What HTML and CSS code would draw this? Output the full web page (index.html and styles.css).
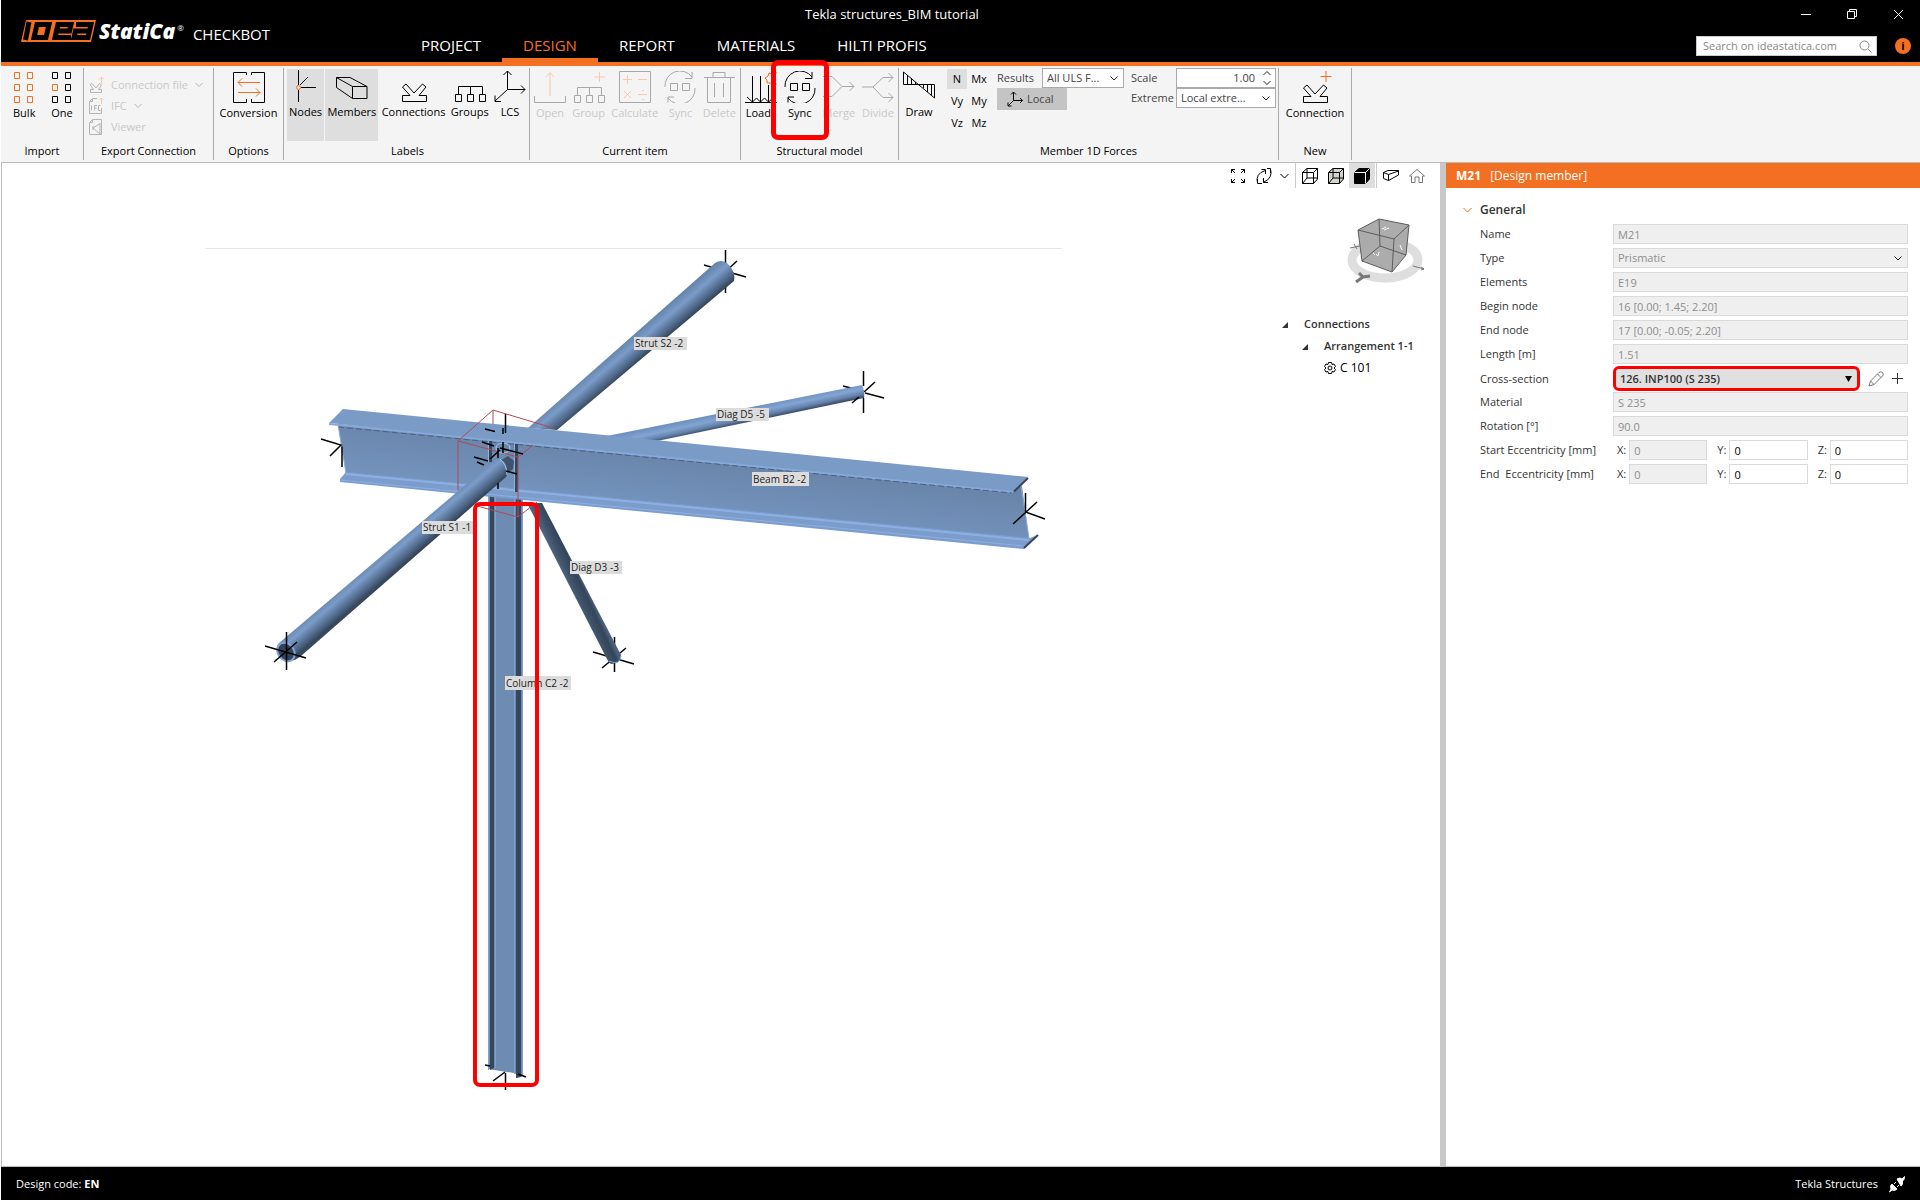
FILE: index.html
```html
<!DOCTYPE html>
<html lang="en">
<head>
    <meta charset="UTF-8">
    <meta name="viewport" content="width=device-width, initial-scale=1.0">
    <title>Tekla structures_BIM tutorial</title>
    <link rel="stylesheet" href="styles.css">
</head>
<body>
    <!-- shared icons -->
    <svg class="defs" width="0" height="0" aria-hidden="true">
        <symbol id="i-conn" viewBox="0 0 32 32"><path d="M4.500 31.500V25.500H12L4.500 17 8 14 16 23 24.500 14 28 17 21 25.500H28.500V31.500Z"/></symbol>
        <symbol id="i-groups" viewBox="0 0 32 32"><path d="M4.500 24V16.500H28.500V24M16.500 16.500V24M1.500 24.500h6v7h-6zM13.500 24.500h6v7h-6zM25.500 24.500h6v7h-6z"/></symbol>
        <symbol id="i-sync" viewBox="0 0 32 32"><path d="M1 16A15 15 0 0 1 28 6M28 1V7.500H21M31 17A15 15 0 0 1 4 27M4 31.500V26H10M6.500 12.500h7v7h-7zM18.500 12.500h7v7h-7z"/></symbol>
        <symbol id="i-axes" viewBox="0 0 32 32"><path d="M13.500 1V19.500H31M13.500 19.500 1 31M9.500 5 13.500 1 17.500 5M27 15.500 31 19.500 27 23.500M1 25.500V31.500H7"/></symbol>
    </svg>

    <header class="header">
        <div class="brand">
            <svg width="76" height="22" viewBox="0 0 76 22" role="img" aria-label="IDEA">
                <path d="M5 0H75L70 22H0Z" fill="#f36f21"/>
                <g fill="none" stroke="#000" stroke-width="5">
                    <path d="M8 2 4.500 20"/>
                    <path d="M16 4.500H28L25 17.500H13Z"/>
                    <path d="M50 17.500H34L37 4.500H50L48.500 11H36"/>
                    <path d="M55 4.500H70L67 17.500H53L54.500 11H68"/>
                </g>
            </svg>
            <span class="brand-name">StatiCa<sup>®</sup></span>
            <span class="brand-app">CHECKBOT</span>
        </div>
        <div class="header-main">
            <div class="title">Tekla structures_BIM tutorial</div>
            <nav class="tabs">
                <a href="#">PROJECT</a>
                <a href="#" class="active">DESIGN</a>
                <a href="#">REPORT</a>
                <a href="#">MATERIALS</a>
                <a href="#">HILTI PROFIS</a>
            </nav>
        </div>
        <div class="header-side">
            <div class="window-buttons">
                <button type="button" aria-label="Minimize"><svg width="11" height="11"><path d="M0 5.500H10"/></svg></button>
                <button type="button" aria-label="Restore"><svg width="11" height="11"><path d="M.500 2.500H7.500V9.500H.500ZM2.500 2.500V.500H9.500V7.500H7.500"/></svg></button>
                <button type="button" aria-label="Close"><svg width="11" height="11"><path d="M1 1 10 10M10 1 1 10"/></svg></button>
            </div>
            <div class="search-row">
                <div class="search">
                    <input type="text" placeholder="Search on ideastatica.com" aria-label="Search on ideastatica.com">
                    <svg width="13" height="13" viewBox="0 0 13 13"><circle cx="5.500" cy="5.500" r="4.500"/><path d="M9 9 12.500 12.500"/></svg>
                </div>
                <button type="button" class="info" aria-label="Info">i</button>
            </div>
        </div>
    </header>

    <div class="ribbon">
        <section class="group group-import">
            <div class="tools">
                <button type="button" class="tool"><svg width="22" height="32" class="orange"><path d="M1.500 1.500h5v6h-5zM14.500 1.500h5v6h-5zM1.500 13.500h5v6h-5zM14.500 13.500h5v6h-5zM1.500 25.500h5v6h-5zM14.500 25.500h5v6h-5z"/></svg>Bulk</button>
                <button type="button" class="tool"><svg width="22" height="32"><path d="M1.500 1.500h5v6h-5zM14.500 1.500h5v6h-5zM14.500 13.500h5v6h-5zM1.500 25.500h5v6h-5zM14.500 25.500h5v6h-5z"/><path class="orange" d="M1.500 13.500h5v6h-5z"/></svg>One</button>
            </div>
            <h2>Import</h2>
        </section>

        <section class="group group-export">
            <div class="stack">
                <button type="button" disabled><svg width="16" height="18" viewBox="0 0 16 18"><path d="M2.500 16.500V13.500H5.500L2 8.500 4 7.500 8 12 11.500 7.500 13.500 9 10.500 13.500H13.500V16.500Z"/><path class="orange" d="M13.500 8V1M11 3.500 13.500 1 16 3.500"/></svg>Connection file<svg width="8" height="6"><path d="M.500 1 4 4.500 7.500 1"/></svg></button>
                <button type="button" disabled><svg width="16" height="18" viewBox="0 0 16 18"><path d="M9 1.500H4.500L1.500 4.500V16.500H13.500V11M4.500 2V4.500H2M3.500 8.500V13.500M6.500 13.500V8.500H9M6.500 11H8.500M12.500 8.500H10.500V13.500H12.500"/><path class="orange" d="M13.500 7V1M11.500 3 13.500 1 15.500 3"/></svg>IFC<svg width="8" height="6"><path d="M.500 1 4 4.500 7.500 1"/></svg></button>
                <button type="button" disabled><svg width="16" height="18" viewBox="0 0 16 18"><path d="M4.500 1.500H13.500V16.500H1.500V4.500ZM4.500 2V4.500H2M5 10 12 5.500V16L5 10M5 8v4"/></svg>Viewer</button>
            </div>
            <h2>Export Connection</h2>
        </section>

        <section class="group group-options">
            <div class="tools">
                <button type="button" class="tool"><svg width="32" height="32"><path d="M13.500 4V1.500H.500V31.500H13.500V28M18.500 4V1.500H31.500V31.500H18.500V28"/><path class="orange" d="M27 11.500H5M9 7.500 5 11.500 9 15.500M5 21.500H27M23 17.500 27 21.500 23 25.500"/></svg>Conversion</button>
            </div>
            <h2>Options</h2>
        </section>

        <section class="group group-labels">
            <div class="tools tight">
                <button type="button" class="tool on"><svg width="32" height="32"><path d="M8.500 0V15M8.500 20V32M11 17.500H26M10 15 18 7"/><circle class="orange" cx="8.500" cy="17.500" r="2"/></svg>Nodes</button>
                <button type="button" class="tool on"><svg width="34" height="32"><path d="M1.500 7.500H15L32 16.500V28.500H17.500L1.500 17.500ZM1.500 7.500 17.500 16.500H32M17.500 16.500V28.500"/></svg>Members</button>
                <button type="button" class="tool"><svg width="32" height="32"><use href="#i-conn"/></svg>Connections</button>
                <button type="button" class="tool"><svg width="32" height="32"><use href="#i-groups"/></svg>Groups</button>
                <button type="button" class="tool"><svg width="32" height="32"><use href="#i-axes"/></svg>LCS</button>
            </div>
            <h2>Labels</h2>
        </section>

        <section class="group group-current">
            <div class="tools">
                <button type="button" class="tool" disabled><svg width="32" height="32"><path d="M.500 25V31.500H31.500V25"/><path class="orange" d="M16 25V2M12 6 16 1.500 20 6"/></svg>Open</button>
                <button type="button" class="tool" disabled><svg width="32" height="32"><use href="#i-groups"/><path class="orange" d="M26.500 1V11M21.500 6H32"/></svg>Group</button>
                <button type="button" class="tool" disabled><svg width="32" height="32"><path d="M.500 .500H31.500V31.500H.500Z"/><path class="orange" d="M4 8.500H13M8.500 4V13M19 8.500H28M5 20 12 27M12 20 5 27M19 23.500H28M23 19.500h2M23 28.500h2"/></svg>Calculate</button>
                <button type="button" class="tool" disabled><svg width="32" height="32"><use href="#i-sync"/></svg>Sync</button>
                <button type="button" class="tool" disabled><svg width="32" height="32"><path d="M1 6.500H32M10 6V1.500H22V6M4.500 7V31.500H27.500V7M11.500 12V26M20.500 12V26"/></svg>Delete</button>
            </div>
            <h2>Current item</h2>
        </section>

        <section class="group group-model">
            <div class="tools">
                <button type="button" class="tool"><svg width="32" height="32"><path d="M0 31.500H32M7.500 5V31M15.500 5V31M23.500 14V31M2 26 7.500 31 11.500 27 15.500 31 19.500 27 23.500 31 28 27"/><path class="orange" d="M32 2 29 1 27 3 24 2 23 5 20 7 22 9 22 12 26 12 28 14 32 13M31 5Q26 8 31 10"/></svg>Loads</button>
                <button type="button" class="tool marked"><svg width="32" height="32"><use href="#i-sync"/></svg>Sync</button>
                <button type="button" class="tool" disabled><svg width="32" height="32"><path d="M0 5.500H9L19 15.500 9 25.500H0M19 15.500H31M26.500 11 31 15.500 26.500 20"/></svg>Merge</button>
                <button type="button" class="tool" disabled><svg width="32" height="32"><path d="M0 16H11L21 6.500H31M11 16 21 26.500H31M26.500 2 31 6.500 26.500 11M26.500 22 31 26.500 26.500 31"/></svg>Divide</button>
            </div>
            <h2>Structural model</h2>
        </section>

        <section class="group group-forces">
            <div class="tools">
                <button type="button" class="tool tool-draw"><svg width="32" height="32"><path d="M.500 2V14.500H31.500V28L.500 2M4.500 5V14M8.500 8V14M12.500 12V14M20.500 15V18M24.500 15V22M28.500 15V25"/></svg>Draw</button>
                <div class="force-grid">
                    <button type="button" class="on">N</button><button type="button">Mx</button>
                    <button type="button">Vy</button><button type="button">My</button>
                    <button type="button">Vz</button><button type="button">Mz</button>
                </div>
                <div class="force-results">
                    <div class="line"><label for="results">Results</label><select id="results"><option>All ULS F...</option></select></div>
                    <button type="button" class="local"><svg width="16" height="16" viewBox="0 0 16 16"><path d="M6.500 1V9.500H15.500M6.500 9.500 1 15M4 3.500 6.500 1 9 3.500M13 7 15.500 9.500 13 12M1 11.500V15H4.500"/></svg>Local</button>
                </div>
                <div class="force-scale">
                    <label for="scale">Scale</label>
                    <div class="spin">
                        <input type="text" id="scale" value="1.00">
                        <svg width="8" height="14"><path d="M.500 4 4 .500 7.500 4M.500 10 4 13.500 7.500 10"/></svg>
                    </div>
                    <label for="extreme">Extreme</label>
                    <select id="extreme"><option>Local extre...</option></select>
                </div>
            </div>
            <h2>Member 1D Forces</h2>
        </section>

        <section class="group group-new">
            <div class="tools">
                <button type="button" class="tool"><svg width="32" height="32"><use href="#i-conn"/><path class="orange" d="M27 0V11M21.500 5.500H32.500"/></svg>Connection</button>
            </div>
            <h2>New</h2>
        </section>
    </div>

    <main class="workspace">
        <div class="viewport">
            <svg class="model" width="880" height="860" viewBox="200 240 880 860">
                <defs>
                    <linearGradient id="strut" gradientUnits="userSpaceOnUse" x1="379" y1="554" x2="397" y2="575">
                        <stop offset="0" stop-color="#6685ad"/><stop offset=".3" stop-color="#7b9cc9"/><stop offset=".65" stop-color="#50698a"/><stop offset=".85" stop-color="#36475b"/><stop offset="1" stop-color="#3b4d63"/>
                    </linearGradient>
                    <linearGradient id="strut2" gradientUnits="userSpaceOnUse" x1="638" y1="331" x2="656" y2="352">
                        <stop offset="0" stop-color="#6685ad"/><stop offset=".3" stop-color="#7b9cc9"/><stop offset=".65" stop-color="#50698a"/><stop offset=".85" stop-color="#36475b"/><stop offset="1" stop-color="#3b4d63"/>
                    </linearGradient>
                    <linearGradient id="diag5" gradientUnits="userSpaceOnUse" x1="760" y1="405" x2="763" y2="419">
                        <stop offset="0" stop-color="#6f91bf"/><stop offset=".4" stop-color="#83a5d4"/><stop offset=".75" stop-color="#6381a9"/><stop offset="1" stop-color="#3b4d66"/>
                    </linearGradient>
                    <linearGradient id="diag3" gradientUnits="userSpaceOnUse" x1="567" y1="584" x2="582" y2="577">
                        <stop offset="0" stop-color="#4c6482"/><stop offset=".35" stop-color="#3f5269"/><stop offset=".75" stop-color="#34455a"/><stop offset="1" stop-color="#4a617e"/>
                    </linearGradient>
                    <linearGradient id="web" gradientUnits="userSpaceOnUse" x1="686" y1="455" x2="680" y2="508">
                        <stop offset="0" stop-color="#6984a8"/><stop offset="1" stop-color="#7393bd"/>
                    </linearGradient>
                </defs>
                <path d="M205 248.500H1062" stroke="#e6e6e6"/>

                <!-- node axes behind the members -->
                <g class="axes">
                    <path d="M725.500 250V293M704 265 746 277M712 284 737 261"/>
                    <path d="M843 386 863 391M865 393 884 398M864 392 875 382"/>
                    <path d="M614.500 637V672M593 652 634 664M602 668 626 648"/>
                </g>

                <path fill="url(#strut2)" d="M528 428 715 263Q722 258 729 265 736 273 734 281L557 430Z"/>
                <path fill="url(#diag5)" d="M607 436 862 385Q865 391 864 398L657 441Z"/>
                <path class="line-dark" d="M863.500 371V386M863.500 398V413M852 403 859 397"/>
                <path fill="url(#diag3)" d="M527 503H542L621 655Q620 664 611 664L608 661Z"/>
                <path d="M609 661Q620 666 621 656" fill="none" stroke="#7fa4d8"/>

                <!-- column -->
                <path fill="#6e8bb1" d="M488 495H522V1077L514 1073 488 1069Z"/>
                <path fill="#36475b" d="M490 495H494V1068L490 1070ZM516 495H521V1077L516 1078Z"/>
                <path d="M488.500 495V1070M495.500 495V1068M514.500 495V1074M522.500 495V1076" fill="none" stroke="#7fa1cf"/>
                <path class="line-dark" d="M505.500 1073V1090M505 1072 493 1081M485 1065 490 1066M518 1074 526 1077"/>

                <!-- beam -->
                <path fill="url(#web)" d="M338 424 1022 486 1029 539 346 473Z"/>
                <path fill="#7b9bc7" d="M343 409 1028 477 1014 492 329 423Z"/>
                <path d="M329 424 1013 492" stroke="#86a9dc" stroke-width="2"/>
                <path d="M338 427 1012 493" stroke="#4c6280" stroke-dasharray="6 3"/>
                <path d="M1014 491.500 1028 478" stroke="#34455a" stroke-width="2"/>
                <path d="M1021 486 1029 538M338 425 346 473" stroke="#86a9dc"/>
                <path fill="#7c9dcb" d="M346 472 1030 538 1038 535 1024 549 340 482V479Z"/>
                <path d="M346 474 1029 540" stroke="#8bb0e4" stroke-width="2"/>
                <path d="M340 480 1024 546" stroke="#8bb0e4"/>
                <path d="M1024 548 1038 535" stroke="#34455a" stroke-width="2"/>

                <!-- node in the middle -->
                <path d="M490.500 441V462M516.500 444V492" stroke="#36475b" stroke-width="3"/>
                <path d="M488.500 441V462M514.500 443V492" stroke="#8bb0e4"/>
                <path class="line-wire" d="M553 428 493 410 458 441 518 457 533 445M458 441V490M493 410V424M518 457V517L477 506M518 517 537 502"/>
                <path fill="#3f536c" d="M498 462 508 456 514 461 513 469 506 474Z"/>
                <path fill="url(#strut)" d="M490 464Q498 455 505 463 510 471 506 477L301 656Q287 667 279 653 275 647 279 643Z"/>
                <path d="M500 459Q507 465 507 475" fill="none" stroke="#a8c8f4"/>
                <ellipse cx="286" cy="652" rx="8" ry="10" transform="rotate(-38 286 652)" fill="#33445a" stroke="#7fa4d8" stroke-width="2"/>
                <ellipse cx="503" cy="448" rx="7" ry="5" fill="none" stroke="#a8c8f4"/>
                <g class="axes">
                    <path d="M286.500 632V670M265 646 306 658M274 662 297 642"/>
                    <path d="M342 446.500V467M321 439 341 445 330 456"/>
                    <path d="M505.500 414V433M485 429 495 431.500M503 428V434M503 442V453M482 442 494 446M500 448 523 454M474 457 488 461M477 462 484 465M498 448V458M498 483V489M490 459 500 450M506 471 517 474"/>
                    <path d="M1025.500 493V512L1045 519M1013 524 1037 502"/>
                </g>

                <g class="tag-box">
                    <rect x="634" y="337" width="53" height="13"/>
                    <rect x="716" y="408" width="53" height="13"/>
                    <rect x="752" y="472" width="57" height="14"/>
                    <rect x="422" y="521" width="53" height="13"/>
                    <rect x="570" y="561" width="52" height="13"/>
                    <rect x="505" y="676" width="66" height="14"/>
                </g>
                <g class="tag-text">
                    <text x="635" y="347">Strut S2 -2</text>
                    <text x="717" y="418">Diag D5 -5</text>
                    <text x="753" y="483">Beam B2 -2</text>
                    <text x="423" y="531">Strut S1 -1</text>
                    <text x="571" y="571">Diag D3 -3</text>
                    <text x="506" y="687">Column C2 -2</text>
                </g>
                <rect x="475" y="504" width="62" height="581" rx="5" fill="none" stroke="#f00" stroke-width="4"/>
            </svg>

            <div class="view-tools">
                <button type="button" aria-label="Zoom all"><svg width="16" height="16"><path d="M1.500 5V1.500H5M1.500 1.500 5 5M11 1.500H14.500V5M14.500 1.500 11 5M1.500 11V14.500H5M1.500 14.500 5 11M14.500 11V14.500H11M14.500 14.500 11 11"/></svg></button>
                <button type="button" aria-label="Rotate"><svg width="16" height="16"><path d="M6 15.500H1.500V11M1.500 15Q-1 6 9 2.500M5.500 1.500H9.500V6M11 .500H14.500V5M14.500 1Q17 10 8 14M12 14.500H7.500V10"/></svg></button>
                <button type="button" class="narrow" aria-label="Rotate options"><svg width="9" height="6"><path d="M.500 1 4.500 5 8.500 1"/></svg></button>
                <i class="sep"></i>
                <button type="button" aria-label="Wireframe"><svg width="16" height="16"><path d="M.500 4.500H11.500V15.500H.500ZM.500 4.500 5 .500H15.500V11L11.500 15.500M11.500 4.500 15.500 .500M5 .500V10H15M5 10 .500 15.500"/></svg></button>
                <button type="button" aria-label="Transparent"><svg width="16" height="16"><path fill="#d4d4ce" d="M.500 4.500 5 .500H15.500V11L11.500 15.500H.500Z"/><path d="M.500 4.500H11.500V15.500M11.500 4.500 15.500 .500M5 .500V10H15M5 10 .500 15.500"/></svg></button>
                <button type="button" class="on" aria-label="Solid"><svg width="16" height="16"><path fill="#000" d="M.500 4.500 5 .500H15.500V11L11.500 15.500H.500Z"/><path class="light" d="M.500 4.500H11.500V15.500M11.500 4.500 15.500 .500"/></svg></button>
                <i class="sep"></i>
                <button type="button" aria-label="Camera"><svg width="16" height="16"><path d="M.500 4.500 5 2.500H15.500V7L5.500 12.500 .500 10.500ZM.500 4.500 5.500 6.500 15.500 3M5.500 6.500V12.500"/></svg></button>
                <button type="button" aria-label="Home view"><svg width="16" height="16"><path class="gray" d="M.500 8 8 1.500 15.500 8H13.500V14.500H10V9H6V14.500H2.500V8Z"/></svg></button>
            </div>

            <div class="side-view">
                <svg class="nav-cube" width="80" height="68" viewBox="0 0 80 68">
                    <ellipse cx="38" cy="42" rx="33" ry="18" fill="none" stroke="#dedede" stroke-width="9"/>
                    <path d="M32 1 62 7 59 37 45 54 15 43 11 12Z" fill="#a8a8a8" fill-opacity=".95"/>
                    <path d="M11 12 32 1 62 7 47 21ZM47 21 45 54M11 12 15 43 45 54 59 37 62 7M32 1 33 28 59 37M33 28 15 43" fill="none" stroke="#5c5c5c"/>
                    <path d="M35 11 39 9M37 12 42 10M26 35 28 37M29 36 31 38 32 34M53 27 55 32" stroke="#fff" fill="none"/>
                    <path d="M3 30 13 28M7 26 10 31M66 48 77 51M74 49 77 51 74 52" stroke="#777" fill="none"/>
                    <path d="M12 55 16 59 23 58M16 59 9 64" stroke="#777" stroke-width="3" fill="none"/>
                </svg>
                <ul class="tree">
                    <li><svg width="6" height="6"><path d="M6 0V6H0Z"/></svg><span>Connections</span>
                        <ul>
                            <li><svg width="6" height="6"><path d="M6 0V6H0Z"/></svg><span>Arrangement 1-1</span>
                                <ul>
                                    <li class="leaf"><svg width="12" height="12"><path d="M4.500 .500H7.500L8 2.500 10 2 11.500 4.500 10 6 11.500 7.500 10 10 8 9.500 7.500 11.500H4.500L4 9.500 2 10 .500 7.500 2 6 .500 4.500 2 2 4 2.500Z"/><circle cx="6" cy="6" r="2"/></svg><span>C 101</span></li>
                                </ul>
                            </li>
                        </ul>
                    </li>
                </ul>
            </div>
        </div>

        <aside class="panel">
            <h1><b>M21</b> [Design member]</h1>
            <form class="props">
                <h2><svg width="9" height="6"><path d="M.500 1 4.500 5 8.500 1"/></svg>General</h2>
                <div class="prop"><label for="name">Name</label><input type="text" id="name" value="M21" disabled></div>
                <div class="prop"><label for="type">Type</label><select id="type" disabled><option>Prismatic</option></select></div>
                <div class="prop"><label for="elements">Elements</label><input type="text" id="elements" value="E19" disabled></div>
                <div class="prop"><label for="begin">Begin node</label><input type="text" id="begin" value="16 [0.00; 1.45; 2.20]" disabled></div>
                <div class="prop"><label for="end">End node</label><input type="text" id="end" value="17 [0.00; -0.05; 2.20]" disabled></div>
                <div class="prop"><label for="length">Length [m]</label><input type="text" id="length" value="1.51" disabled></div>
                <div class="prop">
                    <label for="section">Cross-section</label>
                    <div class="section-row">
                        <select id="section"><option>126. INP100 (S 235)</option></select>
                        <button type="button" aria-label="Edit"><svg width="16" height="16"><path class="gray" d="M1 15 2.500 10 11 1.500Q12.500 0 14.500 1.500 16 3.500 14.500 5L6 13.500ZM2.500 10 6 13.500M9.500 3 13 6.500"/></svg></button>
                        <button type="button" aria-label="Add"><svg width="11" height="11"><path d="M5.500 0V11M0 5.500H11"/></svg></button>
                    </div>
                </div>
                <div class="prop"><label for="material">Material</label><input type="text" id="material" value="S 235" disabled></div>
                <div class="prop"><label for="rotation">Rotation [°]</label><input type="text" id="rotation" value="90.0" disabled></div>
                <div class="prop">
                    <span>Start Eccentricity [mm]</span>
                    <div class="xyz">
                        <label>X:<input type="text" value="0" disabled></label>
                        <label>Y:<input type="text" value="0"></label>
                        <label>Z:<input type="text" value="0"></label>
                    </div>
                </div>
                <div class="prop">
                    <span>End&nbsp; Eccentricity [mm]</span>
                    <div class="xyz">
                        <label>X:<input type="text" value="0" disabled></label>
                        <label>Y:<input type="text" value="0"></label>
                        <label>Z:<input type="text" value="0"></label>
                    </div>
                </div>
            </form>
        </aside>
    </main>

    <footer class="status">
        <span>Design code: <b>EN</b></span>
        <span class="status-link">Tekla Structures
            <svg width="16" height="16" viewBox="0 0 16 16"><path d="M8 3 11 2 13 3 15.500 .500 15 3.500 13.500 5 13.500 8 12 10Z M3 8 8 13 5.500 14.500 3 14 .500 16 2 13 1.500 10Z M5 8 7 6M8 11 10 9" fill="#fff" stroke="#fff"/></svg>
        </span>
    </footer>
</body>
</html>
```

FILE: styles.css
```css
* { box-sizing: border-box; }
body { margin: 0; min-height: 100vh; display: flex; flex-direction: column; border-left: 1px solid #fff; font: 12px/16px "Open Sans", "Noto Sans", sans-serif; color: #000; background: #fff; }
button, input, select { font: inherit; color: inherit; border-radius: 0; }
button { padding: 0; border: none; background: none; }
h1, h2 { margin: 0; font-size: 12px; font-weight: normal; }
svg { display: block; flex: none; fill: none; stroke: currentColor; overflow: visible; }
.defs { position: absolute; }
.orange { stroke: #f36f21; }
.gray { stroke: #777; }

/* header */
.header { display: flex; height: 66px; background: #000; color: #fff; border-bottom: 4px solid #f36f21; }
.brand { display: flex; align-items: center; width: 399px; padding: 0 0 0 20px; }
.brand > svg { stroke: none; }
.brand-name { margin-left: 2px; font-size: 21px; line-height: 24px; font-weight: 800; font-style: italic; }
.brand-name sup { margin-left: 2px; font-size: 8px; font-weight: 400; font-style: normal; vertical-align: 8px; line-height: 0; }
.brand-app { margin-left: 9px; font-size: 15px; line-height: 24px; padding-top: 6px; }
.header-main { flex: 1; display: flex; flex-direction: column; justify-content: space-between; }
.title { padding: 5px 0 0 405px; font-size: 13px; line-height: 18px; }
.tabs { display: flex; }
.tabs a { padding: 0 21px; font-size: 15px; line-height: 26px; color: #fff; text-decoration: none; border-bottom: 4px solid transparent; }
.tabs a.active { color: #f36f21; border-color: #f36f21; }
.header-side { display: flex; flex-direction: column; align-items: flex-end; }
.window-buttons { display: flex; gap: 35px; padding: 9px 16px 0 0; }
.search-row { display: flex; align-items: center; gap: 18px; margin-top: 16px; padding-right: 9px; }
.search { display: flex; align-items: center; width: 181px; height: 20px; padding: 0 4px 0 6px; background: #fff; border: 1px solid #ccc; color: #888; }
.search input { flex: 1; min-width: 0; padding: 0; border: none; font-size: 11px; }
.search input::placeholder { color: #888; }
.info { width: 16px; height: 16px; border-radius: 50%; background: #f36f21; color: #000; font-weight: bold; font-size: 11px; line-height: 16px; }

/* ribbon */
.ribbon { display: flex; height: 97px; padding-top: 2px; background: #f4f4f4; border-bottom: 1px solid #bbb; font-size: 11px; }
.group { display: flex; flex-direction: column; justify-content: space-between; height: 92px; padding: 0 1px; border-right: 1px solid #aaa; }
.group h2 { font-size: 11px; line-height: 18px; text-align: center; }
.tools { display: flex; align-items: flex-start; justify-content: space-between; }
.tool { display: flex; flex-direction: column; align-items: center; height: 73px; padding: 3px 3px 0; line-height: 14px; white-space: nowrap; }
.tool svg { margin-bottom: 3px; }
.tool:disabled { color: #c8c8c8; }
.tool:disabled svg { color: #a8a8a8; }
.tool:disabled .orange, .stack .orange { stroke: #f8c9ab; }
.on { background: #dedede; }
.marked { position: relative; }
.marked::after { content: ""; position: absolute; inset: -8px -10px 1px; border: 5px solid #f00; border-radius: 7px; z-index: 1; }
.group-import { width: 83px; }
.group-import .tools { padding: 0 6px 0 8px; }
.group-export { width: 130px; }
.group-options { width: 70px; }
.group-options .tools, .group-new .tools { justify-content: center; }
.group-labels { width: 246px; padding-left: 3px; }
.group-current { width: 211px; }
.group-model { width: 158px; }
.group-forces { width: 380px; }
.group-forces .tools { justify-content: flex-start; }
.group-new { width: 73px; }
.stack { padding: 6px 0 0 3px; }
.stack button { display: flex; align-items: center; gap: 7px; height: 21px; color: #c8c8c8; }
.stack svg { color: #b4b4b4; }
.tight .tool { padding: 1px 2px 0; height: 72px; margin-top: 1px; }
.tool-draw { padding-top: 2px; margin-right: 9px; }
.force-grid { display: grid; grid-template-columns: 20px 24px; grid-auto-rows: 20px; gap: 2px 0; padding-top: 1px; }
.force-results { display: flex; flex-direction: column; align-items: flex-start; padding-left: 6px; color: #444; }
.line { display: flex; align-items: center; width: 127px; justify-content: space-between; }
.line select { width: 82px; }
.local { display: flex; align-items: center; gap: 4px; width: 70px; height: 22px; padding-left: 10px; background: #c4c4c4; }
.local svg { color: #000; }
.force-scale { display: grid; grid-template-columns: 45px 100px; align-items: center; padding-left: 7px; color: #444; }
.ribbon select, .spin { height: 20px; background-color: #fff; border: 1px solid #aaa; }
select { appearance: none; padding: 0 4px; background: no-repeat right 5px center url("data:image/svg+xml,%3Csvg xmlns='http://www.w3.org/2000/svg' width='8' height='5' fill='none' stroke='%23222'%3E%3Cpath d='M.5.5 4 4 7.500.5'/%3E%3C/svg%3E"); }
.spin { display: flex; align-items: center; padding-right: 4px; }
.spin input { flex: 1; min-width: 0; padding: 0 8px; border: none; background: none; text-align: right; }
.spin svg { color: #222; }

/* workspace */
.workspace { flex: 1; display: flex; }
.viewport { position: relative; flex: 1; min-width: 0; border-left: 1px solid #bbb; border-bottom: 1px solid #bbb; }
.model { position: absolute; left: 198px; top: 77px; stroke: none; }
.axes path, .line-dark { fill: none; stroke: #000; stroke-width: 1.500; }
.line-wire { fill: none; stroke: #b04a55; }
.tag-box { fill: #dcdcdc; }
.tag-text { fill: #222; font-size: 10px; }
.view-tools { display: flex; justify-content: flex-end; height: 25px; padding-right: 10px; position: relative; }
.view-tools button { display: flex; align-items: center; justify-content: center; width: 26px; }
.view-tools .narrow { width: 14px; margin-right: 3px; }
.view-tools .light { stroke: #fff; }
.sep { width: 1px; margin: 0 1px; background: #ccc; }
.side-view { position: relative; display: flex; flex-direction: column; align-items: flex-end; padding-top: 30px; }
.nav-cube { margin-right: 13px; stroke: none; }
.tree { list-style: none; margin: 0; padding: 0; }
.tree ul { list-style: none; margin: 0; padding-left: 20px; }
.tree { width: 158px; padding-top: 27px; color: #333; font-size: 11px; font-weight: 600; }
.tree li { line-height: 22px; }
.tree svg { display: inline-block; margin-right: 16px; fill: #333; stroke: none; }
.tree .leaf { padding-left: 2px; font-weight: 400; font-size: 12px; color: #000; }
.tree .leaf svg { margin-right: 4px; fill: none; stroke: #000; vertical-align: -2px; }

/* properties panel */
.panel { width: 480px; border-left: 6px solid #c8c8c8; border-bottom: 1px solid #bbb; color: #333; }
.panel h1 { padding: 0 10px; line-height: 25px; background: #f36f21; color: #fff; }
.panel h1 b { margin-right: 6px; }
.props { padding: 10px 12px 0 34px; }
.props h2 { display: flex; align-items: center; gap: 8px; height: 24px; margin-left: -17px; font-weight: 600; }
.props h2 svg { color: #f36f21; }
.prop { display: grid; grid-template-columns: 133px 1fr; align-items: center; height: 24px; font-size: 11px; }
.prop > label, .prop > span { white-space: nowrap; }
.prop input, .prop select { width: 100%; min-width: 0; height: 20px; padding: 0 4px; border: 1px solid #dadada; color: #000; }
.prop input:disabled, .prop select:disabled { background-color: #efefef; color: #8e8e8e; opacity: 1; }
.section-row { display: flex; align-items: center; gap: 8px; padding-right: 5px; }
.section-row select { flex: 1; height: 25px; border: 3px solid #f00; border-radius: 6px; font-weight: 600; color: #333; background: #e0e0e0 no-repeat right 5px center url("data:image/svg+xml,%3Csvg xmlns='http://www.w3.org/2000/svg' width='7' height='6'%3E%3Cpath d='M0 0H7L3.500 6Z'/%3E%3C/svg%3E"); }
.xyz { display: grid; grid-template-columns: repeat(3, 1fr); gap: 10px; padding-left: 4px; }
.xyz label { display: flex; align-items: center; }
.xyz input { flex: 1; margin-left: 3px; }

/* status bar */
.status { display: flex; justify-content: space-between; align-items: center; height: 33px; padding: 0 15px; background: #000; color: #fff; font-size: 11px; }
.status-link { display: flex; align-items: center; gap: 11px; }
```
